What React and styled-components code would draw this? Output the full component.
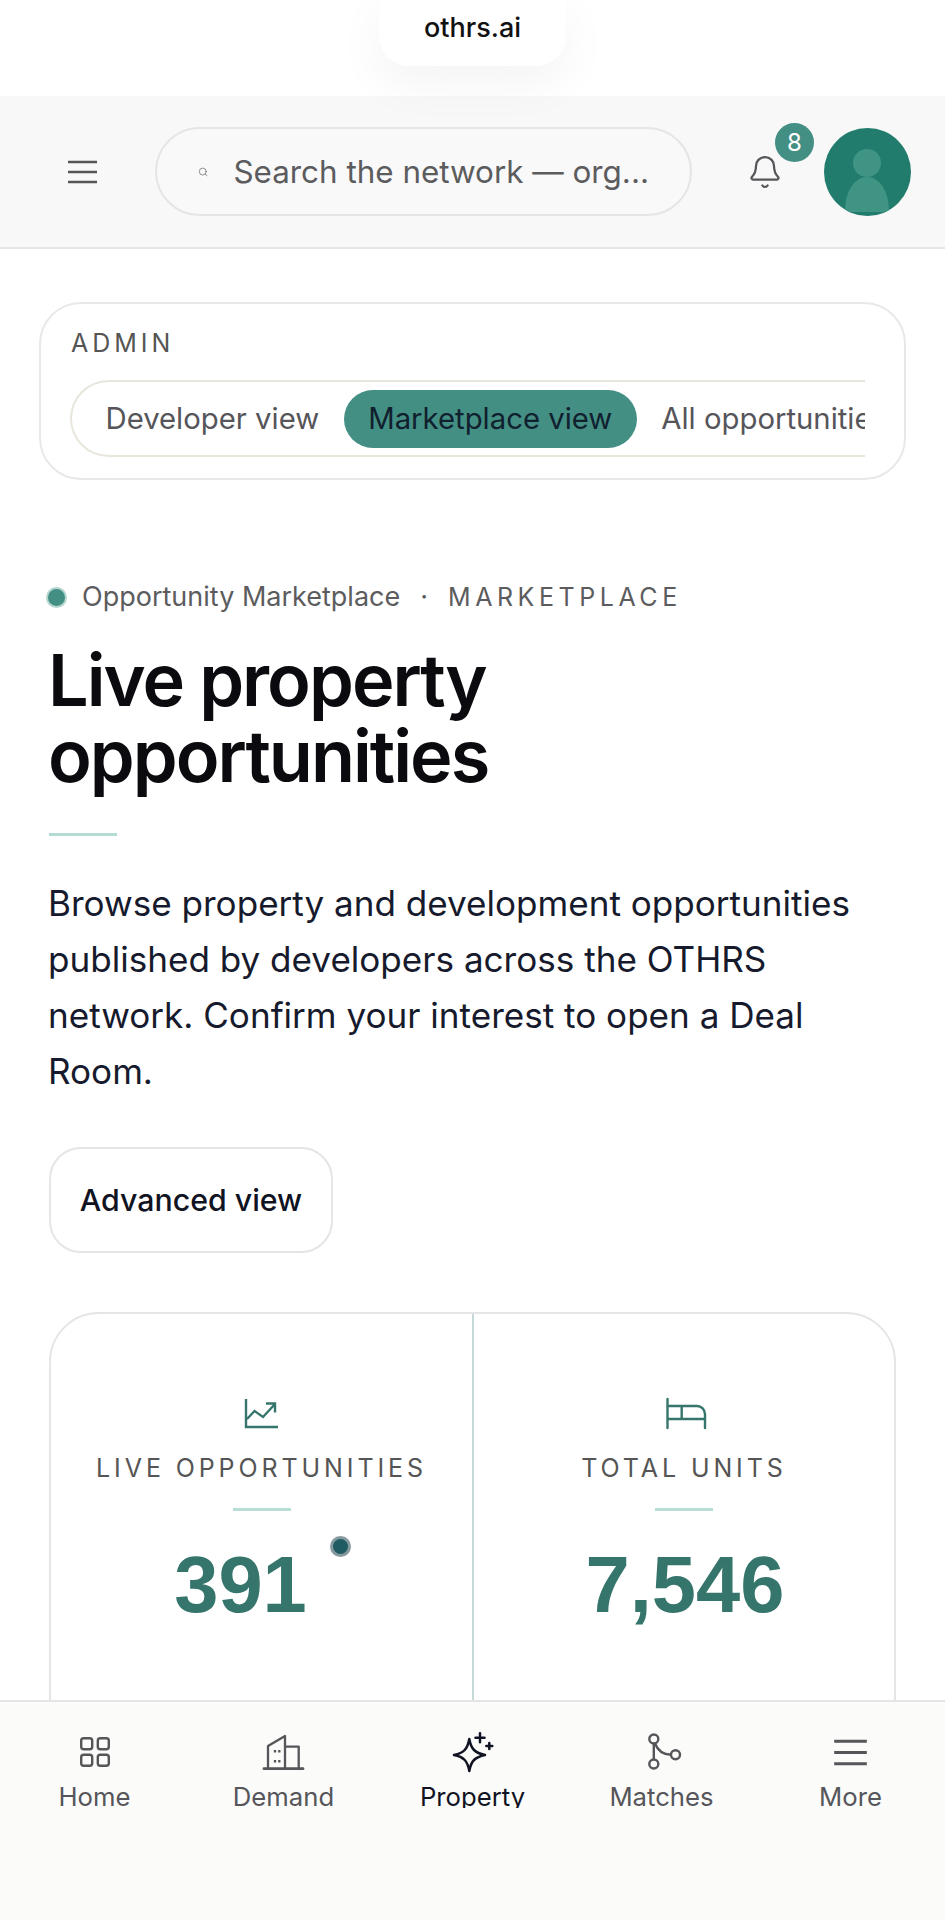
import React from 'react'
import styled, { createGlobalStyle } from 'styled-components'
import { Bell, Search } from 'lucide-react'

const GlobalStyle = createGlobalStyle`
  html, body { margin: 0; padding: 0; background: #fff; }
  * { box-sizing: border-box; }
  body { font-family: Inter, "Liberation Sans", sans-serif; }
`

const tabs = ['Developer view', 'Marketplace view', 'All opportunities', 'Saved']

const stats = [
  { label: 'LIVE OPPORTUNITIES', value: '391', icon: <ChartIcon />, live: true },
  { label: 'TOTAL UNITS', value: '7,546', icon: <BedIcon /> },
]

const navItems = [
  { label: 'Home', icon: <HomeIcon /> },
  { label: 'Demand', icon: <BuildingIcon /> },
  { label: 'Property', icon: <SparkIcon />, active: true },
  { label: 'Matches', icon: <BranchIcon /> },
  { label: 'More', icon: <MenuIcon width={33} height={27} /> },
]

function MenuIcon({ width, height }) {
  return (
    <svg width={width} height={height} viewBox="0 0 29 24" fill="none" stroke="currentColor" strokeWidth="2.500">
      <path d="M0 2h29M0 12h29M0 22h29" />
    </svg>
  )
}

function ChartIcon() {
  return (
    <svg width="38" height="32" viewBox="0 0 38 32" fill="none" stroke="currentColor" strokeWidth="2.400">
      <path d="M3 2v28h32M4 22l7.500-8 8.500 6L32 7M23 6.500h9v9" />
    </svg>
  )
}

function BedIcon() {
  return (
    <svg width="47" height="33" viewBox="-4 0 47 33" fill="none" stroke="currentColor" strokeWidth="2.400" strokeLinecap="round">
      <path d="M2.500 2v29M2.500 9H32a8 8 0 0 1 8 8v14M2.500 22H40M16.700 9v13" />
    </svg>
  )
}

function HomeIcon() {
  return (
    <svg width="30" height="30" viewBox="0 0 30 30" fill="none" stroke="currentColor" strokeWidth="2.400">
      <rect x="1.200" y="1.200" width="11" height="11" rx="2.500" />
      <rect x="17.800" y="1.200" width="11" height="11" rx="2.500" />
      <rect x="1.200" y="17.800" width="11" height="11" rx="2.500" />
      <rect x="17.800" y="17.800" width="11" height="11" rx="2.500" />
    </svg>
  )
}

function BuildingIcon() {
  return (
    <svg width="43" height="37" viewBox="0 0 43 37" fill="none" stroke="currentColor" strokeWidth="2.300" strokeLinejoin="round">
      <path d="M2 34.700h39" strokeWidth="2.800" strokeLinecap="round" />
      <path d="M6 34.700V12L23 2v32.700M23 12.600h13.700v22" />
      <path d="M13 16v2.400M17.300 16v2.400M13 26v2.400M17.300 26v2.400" />
    </svg>
  )
}

function SparkIcon() {
  return (
    <svg width="42" height="42" viewBox="0 0 42 42" fill="none" stroke="currentColor" strokeWidth="2.500" strokeLinecap="round" strokeLinejoin="round">
      <path d="M17.300 8C19 18 23 22 33 24 23 26 19 30 17.300 40 15.500 30 12 26 2 24 12 22 15.500 18 17.300 8z" />
      <path d="M28 2.200v9M23.500 6.700h9M37.300 12v6M34.300 15h6" />
    </svg>
  )
}

function BranchIcon() {
  return (
    <svg width="40" height="40" viewBox="-4.500 0 40 40" fill="none" stroke="currentColor" strokeWidth="2.400">
      <circle cx="7.300" cy="7" r="4.500" />
      <circle cx="7.300" cy="32" r="4.500" />
      <circle cx="29" cy="22.700" r="4.500" />
      <path d="M7.300 11.500v16M8.500 11.500C11 18 15 22.500 24.500 22.700" />
    </svg>
  )
}

export default function App() {
  return (
    <>
      <GlobalStyle />
      <Screen>
        <BrowserBar>
          <AddressPill>othrs.ai</AddressPill>
        </BrowserBar>
        <Header>
          <MenuButton><MenuIcon width={29} height={24} /></MenuButton>
          <SearchBox>
            <Search size={14} strokeWidth={1.6} color="#666" />
            <SearchText>Search the network — org...</SearchText>
          </SearchBox>
          <BellWrap>
            <Bell size={36} strokeWidth={1.5} />
            <Badge>8</Badge>
          </BellWrap>
          <Avatar>
            <svg width="87" height="88" viewBox="0 0 87 88">
              <circle cx="43" cy="35" r="14" fill="#3f9484" />
              <path d="M21 84c0-22 10-35 22-35s22 13 22 35z" fill="#3f9484" />
            </svg>
          </Avatar>
        </Header>
        <Main>
          <AdminCard>
            <AdminLabel>ADMIN</AdminLabel>
            <TabStrip>
              {tabs.map((t, i) => (
                <Tab key={t} $active={i === 1}>{t}</Tab>
              ))}
            </TabStrip>
          </AdminCard>
          <Eyebrow>
            <Dot />
            <span>Opportunity Marketplace</span>
            <Sep>·</Sep>
            <EyebrowCaps>MARKETPLACE</EyebrowCaps>
          </Eyebrow>
          <Title>Live property<br />opportunities</Title>
          <TitleRule />
          <Intro>
            Browse property and development opportunities published by developers across the OTHRS network. Confirm your interest to open a Deal Room.
          </Intro>
          <GhostButton>Advanced view</GhostButton>
          <StatCard>
            {stats.map((s) => (
              <Stat key={s.label}>
                <StatIcon>{s.icon}</StatIcon>
                <StatLabel>{s.label}</StatLabel>
                <StatRule />
                <StatValue>
                  {s.value}
                  {s.live && <LiveDot />}
                </StatValue>
              </Stat>
            ))}
          </StatCard>
        </Main>
        <BottomNav>
          {navItems.map((n) => (
            <NavItem key={n.label} $active={n.active}>
              <NavIcon>{n.icon}</NavIcon>
              <NavLabel>{n.label}</NavLabel>
            </NavItem>
          ))}
        </BottomNav>
      </Screen>
    </>
  )
}

const Screen = styled.div`
  width: 945px;
  height: 1920px;
  display: flex;
  flex-direction: column;
  overflow: hidden;
  background: #fff;
`

const BrowserBar = styled.div`
  position: relative;
  z-index: 1;
  height: 96px;
  flex: none;
  display: flex;
  justify-content: center;
  align-items: flex-start;
`

const AddressPill = styled.div`
  width: 187px;
  height: 66px;
  padding-top: 10px;
  border-radius: 0 0 30px 30px;
  background: #fff;
  box-shadow: 0 16px 50px rgba(0, 0, 0, 0.05);
  text-align: center;
  font-size: 27px;
  line-height: 36px;
  font-weight: 500;
  color: #111;
`

const Header = styled.header`
  height: 153px;
  flex: none;
  display: flex;
  align-items: center;
  padding: 0 34px 0 68px;
  background: #f8f8f8;
  border-bottom: 2px solid #e5e5e8;
  color: #555;
`

const MenuButton = styled.div`
  width: 29px;
  height: 24px;
  margin-right: 58px;
  display: flex;
`

const SearchBox = styled.div`
  width: 537px;
  height: 89px;
  display: flex;
  align-items: center;
  gap: 25px;
  padding: 0 41px;
  border: 2px solid #e5e5e8;
  border-radius: 45px;
  background: #f9f9fa;
  margin-right: 55px;
`

const SearchText = styled.span`
  font-size: 31.400px;
  color: #5c5c5e;
  white-space: nowrap;
`

const BellWrap = styled.div`
  position: relative;
  width: 36px;
  height: 36px;
  margin-right: 41px;
  color: #55555a;
`

const Badge = styled.div`
  position: absolute;
  left: 28px;
  top: -31px;
  width: 39px;
  height: 39px;
  border-radius: 50%;
  background: #448f84;
  color: #fff;
  font-size: 24px;
  line-height: 39px;
  text-align: center;
`

const Avatar = styled.div`
  width: 87px;
  height: 88px;
  border-radius: 50%;
  overflow: hidden;
  background: #217c6d;
  display: flex;
`

const Main = styled.main`
  flex: 1;
  min-height: 0;
  overflow: hidden;
  padding: 53px 49px 0;
`

const AdminCard = styled.section`
  width: 867px;
  height: 178px;
  margin-left: -10px;
  padding: 22px 39px 0 29px;
  border: 2px solid #e8e8e8;
  border-radius: 42px;
`

const AdminLabel = styled.div`
  margin-left: 1px;
  font-size: 25px;
  line-height: 34px;
  letter-spacing: 4px;
  color: #555;
`

const TabStrip = styled.div`
  margin-top: 20px;
  height: 77px;
  display: flex;
  align-items: center;
  padding-left: 9px;
  overflow: hidden;
  border: 2px solid #e8e6dc;
  border-right: none;
  border-radius: 39px 0 0 39px;
`

const Tab = styled.div`
  flex: none;
  height: 58px;
  padding: 0 24.500px;
  border-radius: 29px;
  font-size: 29.300px;
  line-height: 58px;
  white-space: nowrap;
  background: ${(p) => (p.$active ? '#448f84' : 'transparent')};
  color: ${(p) => (p.$active ? '#10202e' : '#55555a')};
`

const Eyebrow = styled.div`
  margin-top: 98px;
  margin-left: -3px;
  display: flex;
  align-items: center;
  font-size: 27px;
  line-height: 38px;
  color: #5c5c5e;
`

const Dot = styled.span`
  width: 21px;
  height: 21px;
  margin-right: 15px;
  border-radius: 50%;
  background: #448f84;
  border: 2px solid #b5d6ce;
`

const Sep = styled.span`
  margin: 0 20px;
`

const EyebrowCaps = styled.span`
  font-size: 25px;
  letter-spacing: 4.550px;
`

const Title = styled.h1`
  margin: 26px 0 0 -1px;
  font-size: 72px;
  line-height: 76px;
  font-weight: 600;
  letter-spacing: -2px;
  color: #0b0b0f;
`

const TitleRule = styled.div`
  width: 68px;
  height: 3px;
  margin-top: 39px;
  background: #b5dcd4;
`

const Intro = styled.p`
  width: 830px;
  margin: 39px 0 0 -1px;
  font-size: 35.100px;
  line-height: 56px;
  color: #161a2c;
`

const GhostButton = styled.div`
  width: 284px;
  height: 106px;
  margin-top: 48px;
  border: 2px solid #e5e5e8;
  border-radius: 32px;
  font-size: 30.300px;
  font-weight: 500;
  line-height: 102px;
  text-align: center;
  color: #101322;
`

const StatCard = styled.section`
  margin-top: 59px;
  width: 847px;
  height: 500px;
  display: grid;
  grid-template-columns: 421px 1fr;
  border: 2px solid #e5e5e8;
  border-radius: 50px;
`

const Stat = styled.div`
  display: flex;
  flex-direction: column;
  align-items: center;
  padding-top: 80px;
  & + & {
    border-left: 2px solid #c6d9d9;
  }
`

const StatIcon = styled.div`
  height: 38px;
  display: flex;
  align-items: center;
  color: #35756b;
`

const StatLabel = styled.div`
  margin-top: 20px;
  font-size: 25px;
  line-height: 32px;
  letter-spacing: 3.900px;
  white-space: nowrap;
  color: #555;
`

const StatRule = styled.div`
  width: 58px;
  height: 3px;
  margin-top: 24px;
  background: #b8dcd6;
`

const StatValue = styled.div`
  display: flex;
  align-items: flex-start;
  margin: 29px 0 0 2px;
  font-family: "Liberation Sans", Arial, sans-serif;
  font-size: 79.500px;
  line-height: 90px;
  font-weight: 700;
  color: #35756b;
`

const LiveDot = styled.span`
  flex: none;
  width: 21px;
  height: 21px;
  margin: -4px 0 0 23px;
  border-radius: 50%;
  background: #205a63;
  border: 3px solid #86999e;
`

const BottomNav = styled.nav`
  height: 220px;
  flex: none;
  display: grid;
  grid-template-columns: repeat(5, 1fr);
  background: #fbfbfa;
  border-top: 2px solid #e5e5e8;
  padding-top: 28px;
  align-items: start;
`

const NavItem = styled.div`
  display: flex;
  flex-direction: column;
  align-items: center;
  color: ${(p) => (p.$active ? '#101322' : '#55555a')};
`

const NavIcon = styled.div`
  height: 44px;
  margin-bottom: 7px;
  display: flex;
  align-items: center;
`

const NavLabel = styled.span`
  height: 27px;
  overflow: hidden;
  font-size: 25.700px;
  line-height: 32px;
`
